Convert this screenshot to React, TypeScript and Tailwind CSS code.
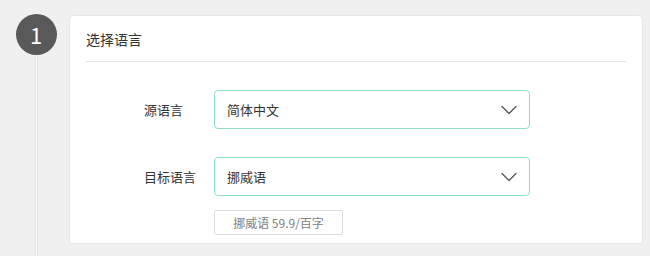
import { ChevronDown } from "lucide-react";

const font = { fontFamily: '"Noto Sans CJK SC", "Noto Sans", sans-serif' };

type SelectRowProps = {
  label: string;
  value: string;
};

function SelectRow({ label, value }: SelectRowProps) {
  return (
    <div className="flex items-center">
      <div className="w-[128px] pl-[58px] text-[13px] text-[#333]">{label}</div>
      <div className="flex h-[39px] w-[316px] items-center justify-between rounded-[4px] border border-[#8fe0c2] bg-white pl-3 pr-[6px]">
        <span className="text-[13px] text-[#333]">{value}</span>
        <ChevronDown className="h-[28px] w-[28px] text-[#555]" strokeWidth={1.1} />
      </div>
    </div>
  );
}

export default function App() {
  return (
    <div className="flex h-[256px] w-[650px] bg-[#f0f0f0] pt-[14px]" style={font}>
      <div className="flex w-[69px] flex-col items-center pl-[3px]">
        <div className="flex h-[41px] w-[41px] shrink-0 items-center justify-center rounded-full bg-[#595959] text-[22px] text-white">
          1
        </div>
        <div className="h-full w-[3px] border-x border-[#e2e2e2] bg-white" />
      </div>
      <div className="flex flex-col">
        <div className="mt-[1px] h-[229px] w-[574px] rounded-[4px] border border-[#e6e6e6] bg-white px-4">
          <div className="flex h-[46px] items-center border-b border-[#e4e4e4] pt-[2px] text-[14px] text-[#333]">
            选择语言
          </div>
          <div className="mt-[28px] flex flex-col gap-[28px]">
            <SelectRow label="源语言" value="简体中文" />
            <SelectRow label="目标语言" value="挪威语" />
          </div>
          <div className="mt-[14px] ml-[128px] flex h-[25px] w-[129px] items-center justify-center rounded-[2px] border border-[#dcdcdc] text-[12px] text-[#808080]">
            挪威语 59.9/百字
          </div>
        </div>
      </div>
    </div>
  );
}
